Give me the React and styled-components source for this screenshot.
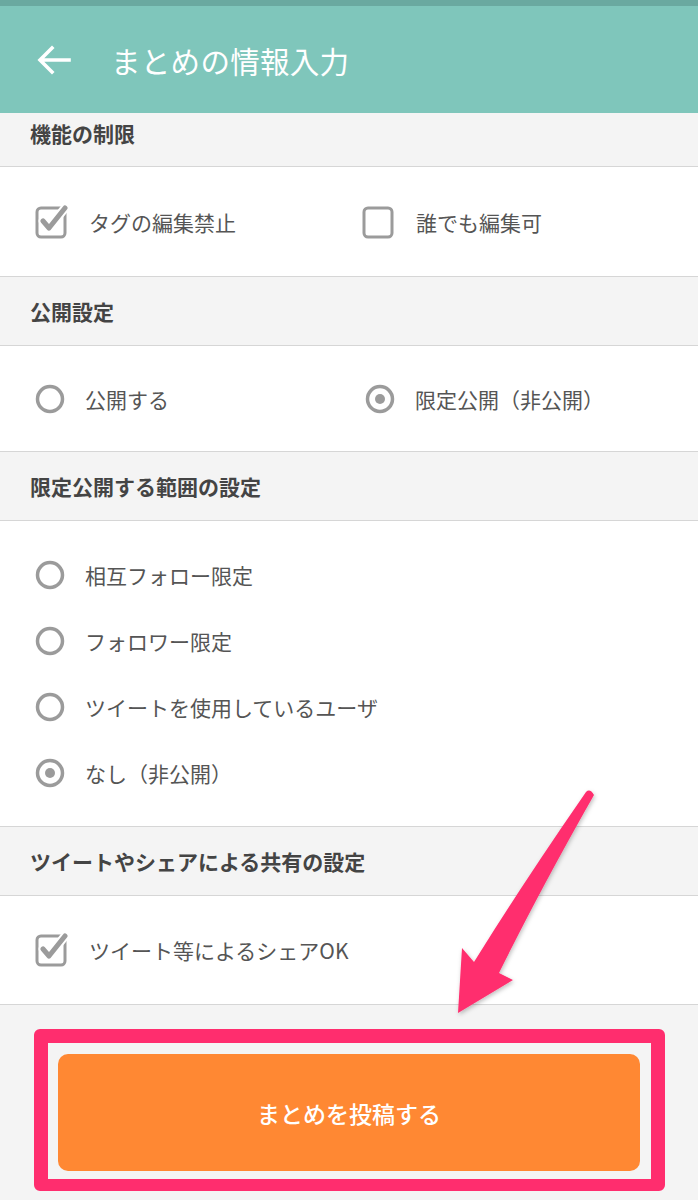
import React from "react";
import styled, { createGlobalStyle } from "styled-components";

const GlobalStyle = createGlobalStyle`
  body {
    margin: 0;
    background: #f4f4f4;
    font-family: "Noto Sans CJK JP", "Noto Sans", sans-serif;
  }
`;

const Page = styled.div`
  position: relative;
  width: 698px;
  min-height: 1200px;
  background: #f4f4f4;
  overflow: hidden;
`;

const AppBar = styled.header`
  height: 107px;
  border-top: 6px solid #6aa9a0;
  background: #7fc6bb;
  display: flex;
  align-items: center;
  padding-left: 36px;
  gap: 39px;
`;

const Title = styled.h1`
  margin: 0;
  color: #fff;
  font-size: 29.5px;
  font-weight: 400;
  letter-spacing: 0.3px;
`;

const SectionHeader = styled.div`
  height: ${(p) => (p.$first ? "54px" : "69px")};
  display: flex;
  align-items: ${(p) => (p.$first ? "flex-start" : "center")};
  padding: ${(p) => (p.$first ? "4px 0 0 30px" : "0 0 0 30px")};
  box-sizing: border-box;
  background: #f4f4f4;
  border-bottom: 1px solid #d6d6d6;
  color: #444;
  font-size: 21px;
  font-weight: 700;
  line-height: 32px;
`;

const Section = styled.section`
  background: #fff;
  border-bottom: 1px solid #d6d6d6;
  height: ${(p) => p.$height}px;
  box-sizing: border-box;
`;

const OptionRow = styled.div`
  height: 100%;
  display: grid;
  grid-template-columns: ${(p) => p.$first || 330}px 1fr;
  align-items: center;
  padding-left: 35px;
`;

const OptionList = styled.div`
  padding: 21px 0 21px 35px;
`;

const Option = styled.label`
  display: flex;
  align-items: center;
  gap: 20px;
  height: ${(p) => (p.$stacked ? "66px" : "auto")};
  color: #555;
  font-size: 21px;
  font-weight: 400;
`;

const Footer = styled.div`
  padding: 24px 33px 10px 34px;
`;

const Highlight = styled.div`
  border: 14px solid #ff2d6e;
  border-width: 14px 14px 12px 14px;
  border-radius: 6px;
  padding: 11px 11px 8px 10px;
`;

const SubmitButton = styled.button`
  display: block;
  width: 100%;
  height: 117px;
  border: none;
  border-radius: 10px;
  background: #ff8833;
  color: #fff;
  font-family: inherit;
  font-size: 23px;
  font-weight: 500;
`;

const ArrowLayer = styled.svg`
  position: absolute;
  left: 0;
  top: 0;
  pointer-events: none;
`;

function BackArrow() {
  return (
    <svg width="36" height="30" viewBox="0 0 36 30">
      <path
        d="M33 15H5M16 3L4 15l12 12"
        fill="none"
        stroke="#fff"
        strokeWidth="3.6"
        strokeLinecap="square"
      />
    </svg>
  );
}

function Checkbox({ checked }) {
  return (
    <svg width="34" height="34" viewBox="0 0 34 34">
      <rect x="2" y="3" width="28" height="29" rx="4" fill="none" stroke="#9b9b9b" strokeWidth="3" />
      {checked && (
        <>
          <path d="M8 16l6 7L30 3" fill="none" stroke="#fff" strokeWidth="9" strokeLinecap="round" strokeLinejoin="round" />
          <path d="M8 16l6 7L30 3" fill="none" stroke="#9b9b9b" strokeWidth="5" strokeLinecap="round" strokeLinejoin="round" />
        </>
      )}
    </svg>
  );
}

function Radio({ checked }) {
  return (
    <svg width="30" height="30" viewBox="0 0 30 30">
      <circle cx="15" cy="15" r="12.5" fill="none" stroke="#9b9b9b" strokeWidth="3.5" />
      {checked && <circle cx="15" cy="15" r="5" fill="#9b9b9b" />}
    </svg>
  );
}

export default function App() {
  return (
    <Page>
      <GlobalStyle />
      <AppBar>
        <BackArrow />
        <Title>まとめの情報入力</Title>
      </AppBar>

      <SectionHeader $first>機能の制限</SectionHeader>
      <Section $height={110}>
        <OptionRow $first={327}>
          <Option>
            <Checkbox checked />
            タグの編集禁止
          </Option>
          <Option>
            <Checkbox />
            誰でも編集可
          </Option>
        </OptionRow>
      </Section>

      <SectionHeader>公開設定</SectionHeader>
      <Section $height={106}>
        <OptionRow>
          <Option>
            <Radio />
            公開する
          </Option>
          <Option>
            <Radio checked />
            限定公開（非公開）
          </Option>
        </OptionRow>
      </Section>

      <SectionHeader>限定公開する範囲の設定</SectionHeader>
      <Section $height={306}>
        <OptionList>
          <Option $stacked>
            <Radio />
            相互フォロー限定
          </Option>
          <Option $stacked>
            <Radio />
            フォロワー限定
          </Option>
          <Option $stacked>
            <Radio />
            ツイートを使用しているユーザ
          </Option>
          <Option $stacked>
            <Radio checked />
            なし（非公開）
          </Option>
        </OptionList>
      </Section>

      <SectionHeader>ツイートやシェアによる共有の設定</SectionHeader>
      <Section $height={109}>
        <OptionRow>
          <Option>
            <Checkbox checked />
            ツイート等によるシェアOK
          </Option>
        </OptionRow>
      </Section>

      <Footer>
        <Highlight>
          <SubmitButton>まとめを投稿する</SubmitButton>
        </Highlight>
      </Footer>

      <ArrowLayer width="698" height="1200" viewBox="0 0 698 1200">
        <defs>
          <filter id="sh" x="-20%" y="-20%" width="140%" height="140%">
            <feDropShadow dx="1" dy="2" stdDeviation="2" floodColor="#000" floodOpacity="0.25" />
          </filter>
        </defs>
        <path
          d="M586 792 Q590 788 594 795 Q540 890 499 973 L513 980 L458 1013 L462 948 L474 962 Q525 880 586 792 Z"
          fill="#ff2e6e"
          filter="url(#sh)"
        />
      </ArrowLayer>
    </Page>
  );
}
